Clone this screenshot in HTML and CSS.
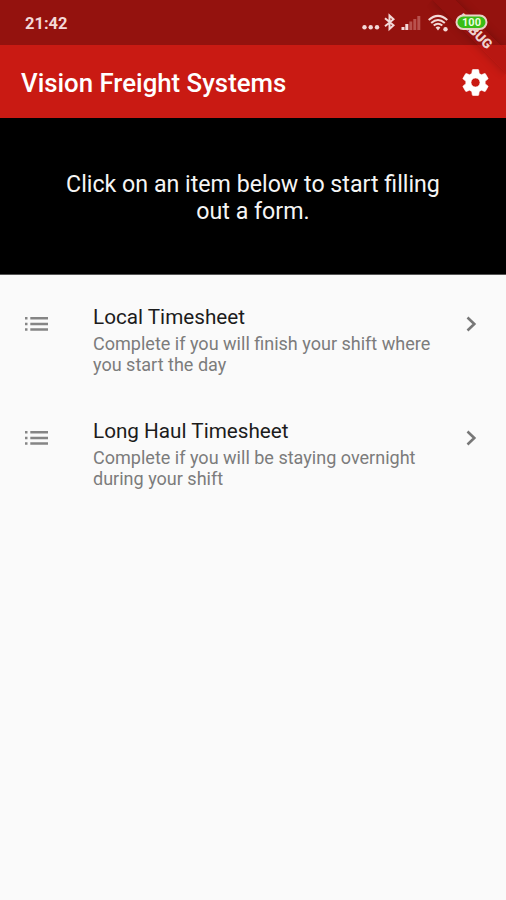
FILE: index.html
```
<!DOCTYPE html>
<html lang="en">
<head>
<meta charset="utf-8">
<title>Vision Freight Systems</title>
<link rel="stylesheet" href="styles.css">
</head>
<body>
<div class="status">
  <span class="time">21:42</span>
  <svg class="indicators" width="130" height="24" viewBox="0 0 130 24">
    <g fill="#f3d9d7">
      <circle cx="7.500" cy="15.300" r="2.200"/><circle cx="13.700" cy="15.300" r="2.200"/><circle cx="20" cy="15.300" r="2.200"/>
      <path d="M44.500 18v-3h3v3zM48.300 18v-6h3v6z"/>
      <circle cx="88.500" cy="17.200" r="2.200"/>
      <path d="M78.600 15.500q2.400-1.800 4.800 0L81 18.500z"/>
    </g>
    <g fill="#b9524e"><path d="M52.300 18V9.500h3V18zM56.300 18V7h3v11zM60.300 18V4h3v14z"/></g>
    <g fill="none" stroke="#f3d9d7" stroke-width="2">
      <path d="M28 6.300l8.500 7-4 3.700V3.500l4 3.700-8.500 7"/>
      <path d="M71.700 8q9.300-8.200 18.600 0M74.200 10.900q6.800-5.800 13.600 0M76.700 13.600q4.300-3.600 8.600 0"/>
    </g>
    <rect x="99.500" y="3.500" width="30" height="13.500" rx="6.750" fill="#39bd16" stroke="#e9d2c6" stroke-width="2"/>
    <text class="charge" x="114.500" y="14.300" text-anchor="middle">100</text>
  </svg>
</div>
<header class="appbar">
  <h1>Vision Freight Systems</h1>
  <svg class="gear" viewBox="0 0 24 24"><path d="M19.430 12.980c.04-.32.07-.64.07-.98s-.03-.66-.07-.98l2.110-1.650c.19-.15.24-.42.12-.64l-2-3.460c-.12-.22-.39-.3-.61-.22l-2.490 1c-.52-.4-1.080-.73-1.690-.98l-.38-2.650C14.460 2.180 14.250 2 14 2h-4c-.25 0-.46.18-.49.42l-.38 2.650c-.61.25-1.170.59-1.690.98l-2.490-1c-.23-.09-.49 0-.61.22l-2 3.460c-.13.22-.07.49.12.64l2.110 1.650c-.04.32-.07.65-.07.98s.03.66.07.98l-2.110 1.650c-.19.15-.24.42-.12.64l2 3.460c.12.22.39.3.61.22l2.490-1c.52.4 1.080.73 1.690.98l.38 2.650c.03.24.24.42.49.42h4c.25 0 .46-.18.49-.42l.38-2.650c.61-.25 1.170-.59 1.690-.98l2.490 1c.23.09.49 0 .61-.22l2-3.460c.12-.22.07-.49-.12-.64l-2.110-1.650zM12 15.500c-1.930 0-3.500-1.570-3.500-3.500s1.570-3.500 3.500-3.500 3.500 1.570 3.500 3.500-1.570 3.500-3.500 3.500z"/></svg>
</header>
<section class="intro"><p>Click on an item below to start filling<br>out a form.</p></section>
<main class="list">
  <div class="item">
    <svg class="lead" width="24" height="14" viewBox="0 0 24 14"><path d="M0 0h2.500v2.500H0zM5.300 0H23v2.500H5.300zM0 5.700h2.500v2.500H0zM5.300 5.700H23v2.500H5.300zM0 11.300h2.500v2.500H0zM5.300 11.300H23v2.500H5.300z"/></svg>
    <div class="copy"><h2>Local Timesheet</h2><p>Complete if you will finish your shift where<br>you start the day</p></div>
    <svg class="chevron" width="12" height="16" viewBox="0 0 12 16"><path d="M1.500 1.500L8.300 8l-6.800 6.500"/></svg>
  </div>
  <div class="item">
    <svg class="lead" width="24" height="14" viewBox="0 0 24 14"><path d="M0 0h2.500v2.500H0zM5.300 0H23v2.500H5.300zM0 5.700h2.500v2.500H0zM5.300 5.700H23v2.500H5.300zM0 11.300h2.500v2.500H0zM5.300 11.300H23v2.500H5.300z"/></svg>
    <div class="copy"><h2>Long Haul Timesheet</h2><p>Complete if you will be staying overnight<br>during your shift</p></div>
    <svg class="chevron" width="12" height="16" viewBox="0 0 12 16"><path d="M1.500 1.500L8.300 8l-6.800 6.500"/></svg>
  </div>
</main>
<div class="banner"><span>DEBUG</span></div>
</body>
</html>
```
FILE: styles.css
```
* { box-sizing: border-box; }
html { overflow: hidden; }
body {
  margin: 0;
  width: 506px;
  height: 900px;
  position: relative;
  overflow: hidden;
  background: #fafafa;
  font-family: Roboto, "Liberation Sans", sans-serif;
}
h1, h2, p { margin: 0; }
.status {
  height: 45px;
  padding: 12px 16px 0 25px;
  display: flex;
  justify-content: space-between;
  background: #94120e;
}
.time { font-size: 16.500px; line-height: 24px; font-weight: 700; color: #f3d9d7; }
.indicators { position: relative; z-index: 2; overflow: visible; margin-right: 3px; }
.charge { font-size: 11px; font-weight: 700; fill: #eaffdf; }
.appbar {
  height: 73px;
  padding: 1px 15px 0 21px;
  display: flex;
  align-items: center;
  justify-content: space-between;
  background: #c91a13;
}
h1 { position: relative; top: 0.5px; font-size: 25.800px; line-height: 32px; font-weight: 500; color: #fff; white-space: nowrap; }
.gear { width: 31px; height: 31px; fill: #fff; stroke: #fff; stroke-width: .5; }
.intro {
  height: 157px;
  padding-top: 53px;
  background: #000;
  border-bottom: 1px solid #555;
  color: #f5f5f5;
  font-size: 23.200px;
  line-height: 27px;
  text-align: center;
  white-space: nowrap;
}
.list { padding-top: 28px; }
.item { height: 113.500px; padding: 0 28px 0 25px; display: flex; }
.lead { margin-top: 14px; fill: #858585; }
.copy { flex: 1; margin-left: 44px; white-space: nowrap; }
h2 { font-size: 20.700px; line-height: 28px; font-weight: 400; color: #1c1c1c; }
.copy p { padding-top: 2px; font-size: 18.050px; line-height: 21px; color: #7c7c7c; }
.chevron { margin-top: 13px; fill: none; stroke: #777; stroke-width: 2.600; }
.banner {
  position: absolute;
  left: 423px;
  top: 23px;
  width: 104px;
  height: 16px;
  transform: rotate(45deg);
  background: rgba(145, 18, 16, .3);
  box-shadow: 0 0 10px rgba(0, 0, 0, .22);
  clip-path: inset(-12px 0);
  color: #efd3d0;
  font-size: 13.500px;
  font-weight: 900;
  line-height: 16px;
  text-align: center;
}
```
